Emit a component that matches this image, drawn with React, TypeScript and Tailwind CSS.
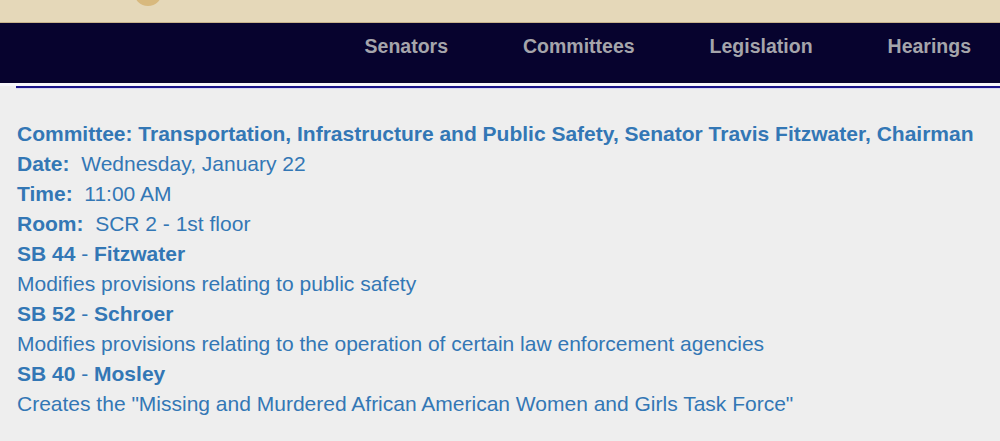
import React from "react";

const bills = [
  { num: "SB 44", sponsor: "Fitzwater", desc: "Modifies provisions relating to public safety" },
  { num: "SB 52", sponsor: "Schroer", desc: "Modifies provisions relating to the operation of certain law enforcement agencies" },
  { num: "SB 40", sponsor: "Mosley", desc: 'Creates the "Missing and Murdered African American Women and Girls Task Force"' },
];

export default function App() {
  return (
    <div className="min-h-[441px] bg-[#eeeeee] font-['Liberation_Sans',Arial,sans-serif]">
      {/* top banner */}
      <div className="relative h-[23px] overflow-hidden bg-[#e5d8b9] border-b border-[#c8b48c]">
        <div className="absolute left-[134px] top-[-22px] h-[28px] w-[28px] rounded-full bg-[#d8b97e]" />
      </div>

      {/* nav */}
      <nav className="flex h-[60px] items-center justify-end gap-[75px] bg-[#07032e] pr-[29px] pb-[12px]">
        {["Senators", "Committees", "Legislation", "Hearings"].map((item) => (
          <a key={item} className="text-[19.5px] font-bold text-[#a5a5ab]">
            {item}
          </a>
        ))}
      </nav>

      {/* divider */}
      <div className="h-[3px] bg-[#f7f7fb]" />
      <div className="ml-[16px] h-[2px] bg-[#1a148a]" />
      <div className="ml-[16px] h-[1px] bg-[#d8d8f0]" />

      {/* hearing */}
      <div className="px-[17px] pt-[30px] text-[21px] leading-[30px] text-[#3377b5]">
        <div className="font-bold">
          Committee: Transportation, Infrastructure and Public Safety, Senator Travis Fitzwater, Chairman
        </div>
        <div>
          <b>Date:</b>&nbsp; Wednesday, January 22
        </div>
        <div>
          <b>Time:</b>&nbsp; 11:00 AM
        </div>
        <div>
          <b>Room:</b>&nbsp; SCR 2 - 1st floor
        </div>
        {bills.map((b) => (
          <div key={b.num}>
            <div>
              <b>{b.num}</b> - <b>{b.sponsor}</b>
            </div>
            <div>{b.desc}</div>
          </div>
        ))}
      </div>
    </div>
  );
}
